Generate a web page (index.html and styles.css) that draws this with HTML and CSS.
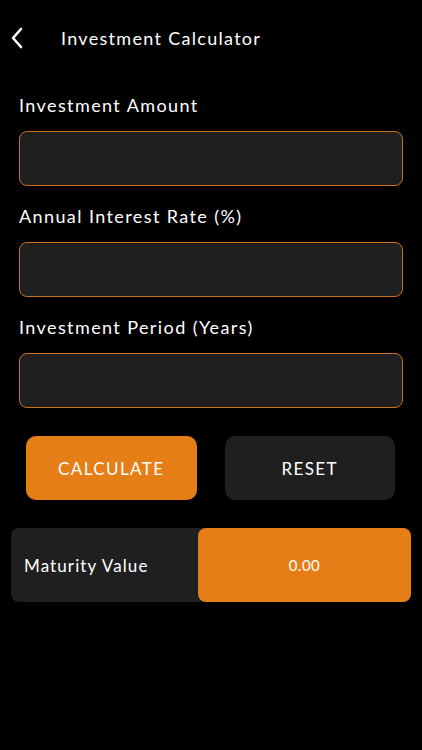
FILE: index.html
```html
<!DOCTYPE html>
<html>
<head>
<meta charset="utf-8">
<link rel="stylesheet" href="styles.css">
</head>
<body>
<div class="app">
  <header class="topbar">
    <span class="back">
      <svg width="14" height="22" viewBox="0 0 14 22"><path d="M11 2 L3 11 L11 20" fill="none" stroke="#fff" stroke-width="2.6" stroke-linecap="round" stroke-linejoin="round"/></svg>
    </span>
    <h1 class="title">Investment Calculator</h1>
  </header>
  <main class="form">
    <div class="field">
      <label class="label">Investment Amount</label>
      <div class="input"></div>
    </div>
    <div class="field">
      <label class="label">Annual Interest Rate (%)</label>
      <div class="input"></div>
    </div>
    <div class="field">
      <label class="label">Investment Period (Years)</label>
      <div class="input"></div>
    </div>
  </main>
  <div class="actions">
    <button class="btn btn-primary">CALCULATE</button>
    <button class="btn btn-dark">RESET</button>
  </div>
  <div class="result">
    <div class="result-label">Maturity Value</div>
    <div class="result-value">0.00</div>
  </div>
</div>
</body>
</html>
```
FILE: styles.css
```css
* { box-sizing: border-box; }
html, body {
  margin: 0;
  padding: 0;
  background: #000;
  color: #fff;
  font-family: Lato, "Open Sans", sans-serif;
}
.app {
  width: 422px;
  min-height: 750px;
  display: flex;
  flex-direction: column;
}
.topbar {
  height: 76px;
  display: flex;
  align-items: center;
  padding: 0 0 0 10px;
}
.back {
  display: flex;
  width: 14px;
  height: 22px;
  margin-right: 37px;
}
.title {
  margin: 0;
  font-size: 18px;
  font-weight: 400;
  letter-spacing: 1.3px;
}
.form {
  display: flex;
  flex-direction: column;
  gap: 18px;
  padding: 17px 19px 0 19px;
}
.field {
  display: flex;
  flex-direction: column;
  gap: 14px;
}
.label {
  font-size: 18px;
  line-height: 24px;
  letter-spacing: 1.4px;
}
.input {
  height: 55px;
  background: #1f1f1f;
  border: 1px solid #cc701c;
  border-radius: 8px;
}
.actions {
  display: flex;
  gap: 28px;
  padding: 28px 27px 0 26px;
}
.btn {
  flex: 1;
  height: 64px;
  border: none;
  border-radius: 10px;
  color: #fff;
  font-family: Lato, "Open Sans", sans-serif;
  font-size: 17px;
  letter-spacing: 1.4px;
  padding: 0;
}
.btn-primary { background: #e67e17; }
.btn-dark { background: #1f1f1f; }
.result {
  margin: 28px 11px 0 11px;
  height: 74px;
  display: flex;
  background: #1f1f1f;
  border-radius: 8px;
}
.result-label {
  width: 187px;
  display: flex;
  align-items: center;
  padding-left: 13px;
  font-size: 17px;
  letter-spacing: 1.1px;
}
.result-value {
  flex: 1;
  background: #e67e17;
  border-radius: 8px;
  display: flex;
  align-items: center;
  justify-content: center;
  font-size: 15px;
  letter-spacing: 0.5px;
}
```
